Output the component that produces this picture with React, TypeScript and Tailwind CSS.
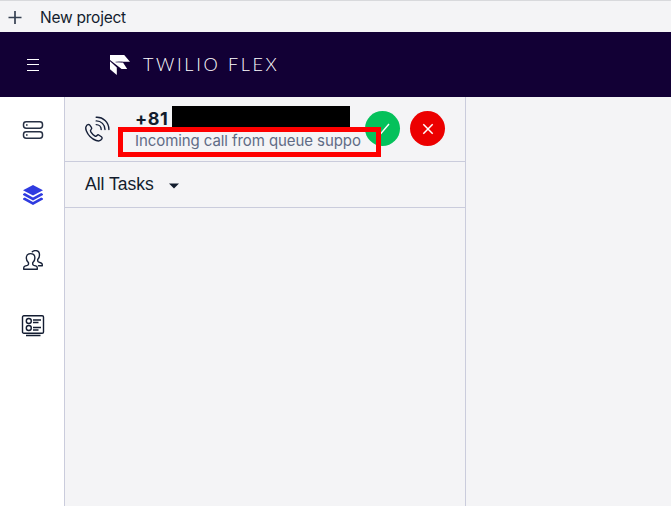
import React from 'react';

const inter = "font-['Inter','Liberation_Sans',sans-serif]";

function FlexLogo() {
  return (
    <svg width="20" height="20" viewBox="0 0 20 20" fill="#fff">
      <path d="M0 0h14.2L20 6.7H6.6L13 7.6 17.2 14H11.6L0 5z" />
      <path d="M0 6.2L6.8 12.4V20L0 14.2z" />
      <path d="M5.6 7.1h7" stroke="#120035" strokeWidth=".6" />
    </svg>
  );
}

function ServersIcon() {
  return (
    <svg width="22" height="20" viewBox="0 0 22 20" fill="none" stroke="#273044" strokeWidth="1.5">
      <rect x="1.5" y="1.7" width="19" height="6.6" rx="2.7" />
      <rect x="1.5" y="11.7" width="19" height="6.6" rx="2.7" />
      <path d="M4 5h1.6M4 15h1.6" strokeWidth="1.6" />
    </svg>
  );
}

function LayersIcon() {
  return (
    <svg width="20" height="20" viewBox="0 0 20 20" fill="#2f3be0">
      <path d="M10 0l10 5.3-10 5.3L0 5.3z" />
      <path d="M0 9l1.8-1L10 12.4 18.2 8 20 9v1l-10 5.5L0 10z" />
      <path d="M0 13.5l1.8-1L10 17l8.2-4.5 1.8 1v1L10 20 0 14.5z" />
    </svg>
  );
}

function PeopleIcon() {
  return (
    <svg width="20" height="20" viewBox="0 0 20 20" fill="none" stroke="#182238" strokeWidth="1.4" strokeLinejoin="round" strokeLinecap="round">
      <path d="M5.5 12.8C3.9 11.2 3.3 9.8 3.3 8c0-2.8 1.8-4.4 4.3-4.4s4.3 1.6 4.3 4.4c0 1.8-.6 3.4-2.2 4.8v1.4c0 .6.4.9 1.2 1.2l2.4.8c.8.3 1 .8 1 1.8v1.3H.7V18c0-1 .4-1.5 1.2-1.8l2.4-.8c.8-.3 1.2-.6 1.2-1.2z" />
      <path d="M9.3 1.8c.8-.8 1.9-1.2 3.2-1.2 2.5 0 4 1.7 4 4.4 0 1.8-.6 3.3-1.8 4.5v1.2c0 .8.4 1.2 1.2 1.5l2.2.8c.8.3 1.2.8 1.2 1.7v1h-3.8" />
    </svg>
  );
}

function CardsIcon() {
  return (
    <svg width="24" height="22" viewBox="0 0 24 22" fill="none" stroke="#131c31" strokeWidth="1.4">
      <rect x="1.5" y=".8" width="21" height="17.4" rx="1.3" />
      <circle cx="7.8" cy="6" r="2.5" />
      <circle cx="7.8" cy="13" r="2.5" />
      <path d="M12 5h8M12 7.5h5.5M12 12.5h8M12 15h5.5M5 20.5h14.5" />
    </svg>
  );
}

function PhoneIcon() {
  return (
    <svg width="26" height="27" viewBox="0 0 26 27" fill="none" stroke="#162039" strokeWidth="1.4" strokeLinecap="round" strokeLinejoin="round">
      <path d="M2.6 9.6l.9-.8c.8-.6 1.7-.4 2.3.4l1.6 2.2c.5.8.4 1.5-.3 2.1-.9.8-.9 1.4-.3 2.3 1 1.6 2.3 2.9 3.9 4 .9.6 1.6.6 2.3-.3.6-.7 1.4-.8 2.1-.3l2.3 1.6c.8.6.9 1.5.3 2.2l-.9 1c-1.2 1.2-2.9 1.1-4.6.5-4.5-1.7-8.1-5.2-9.9-9.8-.7-1.8-.9-3.8.3-5.1z" />
      <path d="M12.2 1.3C19 .9 24.9 6.3 24.9 13.6M12.2 4.9c4.9-.1 8.9 3.8 8.8 8.7M12.2 8.6c2.8 0 5 2.2 5 5" />
    </svg>
  );
}

export default function App() {
  return (
    <div className={`flex h-[506px] w-[671px] flex-col overflow-hidden bg-[#f4f4f6] text-[#121c2d] ${inter}`}>
      <div className="flex h-8 shrink-0 items-center border-t border-[#d8d9dc] pl-2 pt-0.5">
        <svg width="14" height="14" viewBox="0 0 14 14" stroke="#354052" strokeWidth="1.7">
          <path d="M.5 6.5h13M7 0v13" />
        </svg>
        <span className="ml-[18px] text-[15.5px] leading-5 tracking-[-0.24px]">New project</span>
      </div>
      <header className="flex h-[65px] shrink-0 items-center bg-[#120035] pl-[26px]">
        <svg width="14" height="14" viewBox="0 0 14 14" stroke="#fff" strokeWidth="1">
          <path d="M1 1.5h12M1 6.5h12M1 12.5h12" />
        </svg>
        <div className="ml-[70px]"><FlexLogo /></div>
        <span className="-mt-px ml-[13px] whitespace-nowrap font-['Lato',sans-serif] text-[18px] font-light tracking-[2.65px] text-white">TWILIO FLEX</span>
      </header>
      <div className="flex min-h-0 flex-1">
        <nav className="flex w-[65px] shrink-0 flex-col border-r border-[#caccdc] bg-white pl-0.5">
          <div className="flex h-[65px] items-center justify-center pt-px"><ServersIcon /></div>
          <div className="flex h-[65px] items-center justify-center"><LayersIcon /></div>
          <div className="flex h-[65px] items-center justify-center pt-px"><PeopleIcon /></div>
          <div className="flex h-[65px] items-center justify-center pt-0.5"><CardsIcon /></div>
        </nav>
        <main className="w-[401px] shrink-0 border-r border-[#caccdc]">
          <section className="relative flex h-[65px] border-b border-[#caccdc]">
            <div className="ml-[19px] mt-[19px] w-[51px]"><PhoneIcon /></div>
            <div className="w-[230px] pt-3">
              <div className="flex h-[21px] items-start">
                <span className="w-[37px] shrink-0 text-[18px] font-bold leading-5 tracking-[0.5px]">+81</span>
                <div className="-mt-[3px] h-[22px] w-[178px] bg-black" />
              </div>
              <div className="whitespace-nowrap text-[15px] leading-[22px] tracking-[-0.08px] text-[#606b85]">Incoming call from queue suppo</div>
            </div>
            <div className="mt-[14px] flex h-[35px] gap-[10px]">
              <div className="flex size-[35px] items-center justify-center rounded-full bg-[#05c15b]">
                <svg width="14" height="12" viewBox="0 0 14 12" fill="none" stroke="#fff" strokeWidth="1.4"><path d="M1 7l3.5 4L13 1" /></svg>
              </div>
              <div className="flex size-[35px] items-center justify-center rounded-full bg-[#ec0000]">
                <svg width="12" height="12" viewBox="0 0 12 12" stroke="#fff" strokeWidth="1.5"><path d="M1.3 1.3l9.4 9.4M10.7 1.3l-9.4 9.4" /></svg>
              </div>
            </div>
            <div className="absolute left-[53px] top-[29.5px] h-[30px] w-[263px] border-[5px] border-[#ff0000]" />
          </section>
          <section className="flex h-[46px] items-center border-b border-[#caccdc] pb-0.5 pl-5 font-['Liberation_Sans',Arial,sans-serif]">
            <span className="text-[17.5px] leading-6">All Tasks</span>
            <svg className="ml-[15px] mt-1" width="10" height="6" viewBox="0 0 10 6" fill="#121c2d"><path d="M0 .5h10L5 5.5z" /></svg>
          </section>
        </main>
      </div>
    </div>
  );
}
